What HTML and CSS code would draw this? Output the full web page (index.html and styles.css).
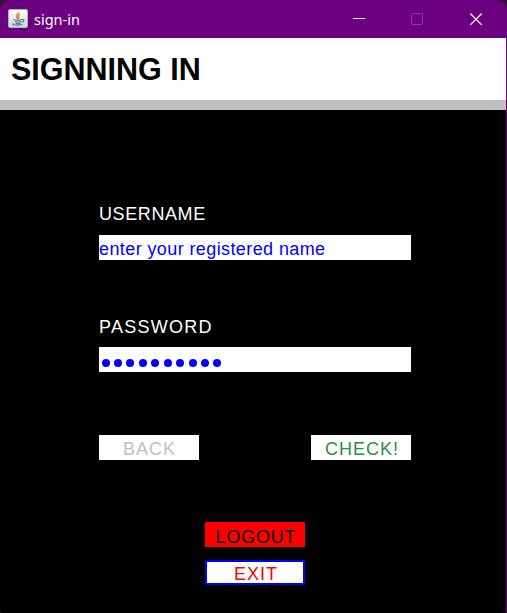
FILE: index.html
```
<!DOCTYPE html>
<html lang="en">
<head>
<meta charset="utf-8">
<title>sign-in</title>
<link rel="stylesheet" href="styles.css">
</head>
<body>
<main class="window">
  <header class="titlebar">
    <svg class="app-icon" width="20" height="19" viewBox="0 0 20 19" fill="none">
      <defs><linearGradient id="tile" x2="0" y2="1"><stop stop-color="#fff"/><stop offset="1" stop-color="#ccd6db"/></linearGradient></defs>
      <rect x=".5" y=".5" width="19" height="18" rx="1.5" fill="url(#tile)" stroke="#a9b5bb"/>
      <path d="M10.5 3c1 2-3.4 2.8-2 5l1.4 1.8M12 5.3c-3 1.4-2.2 2.2-1.2 3.3.5.6 0 1.2-.7 1.8" stroke="#e98732" stroke-width="1.3"/>
      <path d="M6 10.4c-2 .8 6 1 8 0M7 12.5c2 .7 4 .6 6 0M7.5 14.2c1.5.6 3.5.6 5 0M14 10.7c3-.8 2.3 2-.3 2.4M5.5 14.5c-3 1.5 4 2.3 9 .7" stroke="#527b9e" stroke-width="1.1"/>
    </svg>
    <span class="caption">sign-in</span>
    <svg class="controls" width="130" height="14" viewBox="0 0 130 14" fill="none">
      <path d="M0 5.5h12" stroke="#fff"/>
      <rect x="58.5" y=".5" width="11" height="11" rx="1" stroke="#8d3ba2"/>
      <path d="M117.3.5l11.4 11.4M128.7.5l-11.4 11.4" stroke="#fff" stroke-width="1.2"/>
    </svg>
  </header>
  <h1 class="heading">SIGNNING IN</h1>
  <form class="form">
    <label class="label username-label" for="user">USERNAME</label>
    <div class="field" id="user">enter your registered name</div>
    <label class="label password-label" for="pass">PASSWORD</label>
    <div class="field dots" id="pass">
      <i></i><i></i><i></i><i></i><i></i><i></i><i></i><i></i><i></i><i></i>
    </div>
    <div class="actions">
      <button type="button" class="button back">BACK</button>
      <button type="button" class="button check">CHECK!</button>
    </div>
    <button type="button" class="button logout">LOGOUT</button>
    <button type="button" class="button exit">EXIT</button>
  </form>
</main>
</body>
</html>
```
FILE: styles.css
```
* { box-sizing: border-box; }
body { margin: 0; background: #202020; }
.window {
  width: 507px;
  height: 613px;
  overflow: hidden;
  background: #000;
  border-right: 1px solid #6b0080;
  border-radius: 9px 9px 3px 3px;
  font: 18px/25px "Liberation Sans", Arial, sans-serif;
}
.titlebar {
  display: flex;
  width: 507px;
  height: 38px;
  padding-left: 8px;
  background: #6b0080;
  color: #fff;
}
.app-icon { margin-top: 9px; }
.caption {
  margin: 9px 0 0 6px;
  font: 14.5px/20px "Noto Sans", sans-serif;
}
.controls { margin: 13px 24px 0 auto; }
.heading {
  height: 72px;
  margin: 0;
  padding-left: 11px;
  border-bottom: 10px solid #c0c0c0;
  background: #fff;
  font: bold 30.5px/62px "Liberation Sans", Arial, sans-serif;
}
.form {
  display: flex;
  flex-direction: column;
  width: 312px;
  margin: 92px 0 0 99px;
}
.label { height: 25px; color: #fff; }
.username-label { letter-spacing: .6px; }
.password-label { margin-top: 55px; letter-spacing: 1.25px; }
.field {
  height: 25px;
  margin-top: 8px;
  padding-top: 2px;
  background: #fff;
  color: #00f;
  letter-spacing: .4px;
  white-space: nowrap;
}
.password-label + .field { margin-top: 7px; }
.dots { display: flex; gap: 4.45px; padding: 12px 0 0 2.5px; }
.dots i { width: 8px; height: 8px; border-radius: 50%; background: #00f; }
.actions { display: flex; justify-content: space-between; margin-top: 63px; }
.button {
  width: 100px;
  height: 25px;
  padding: 3px 0 0 1px;
  border: 0;
  border-radius: 0;
  background: #fff;
  font: inherit;
  line-height: 22px;
  letter-spacing: 1px;
  white-space: nowrap;
}
.back { color: #c0c0c0; }
.check { padding-left: 2px; color: #26913e; }
.logout { margin: 62px 0 0 106px; padding: 5px 0 0 2px; line-height: 20px; background: #f00; color: #000; letter-spacing: .8px; }
.exit { margin: 13px 0 0 106px; padding: 3px 0 0 2px; border: 2px solid #00f; color: #f00; line-height: 18px; }
```
